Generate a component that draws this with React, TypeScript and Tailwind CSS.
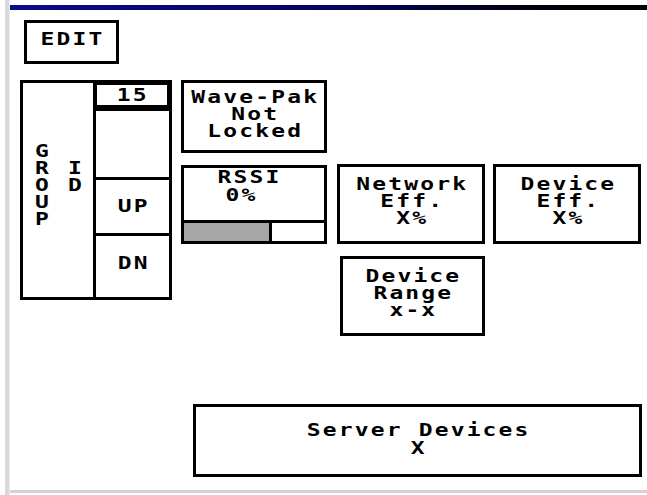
import React from "react";

const F = "font-['DejaVu_Sans_Mono','Liberation_Mono',monospace] font-bold text-[17px] leading-[17px] text-black scale-x-[1.35]";
const T = `${F} tracking-[1.6px]`;

function Lines({ text, className = "" }: { text: string; className?: string }) {
  return <div className={`${T} text-center whitespace-pre pl-[1.6px] ${className}`}>{text}</div>;
}

export default function App() {
  return (
    <div className="w-[647px] h-[495px] bg-white overflow-hidden flex">
      <div className="w-[5px] bg-white" />
      <div className="w-[5px] bg-[#d9d9d9] border-r border-[#ececec]" />
      <div className="flex-1 flex flex-col">
        <div className="h-[5px] bg-white" />
        <div className="h-[5px] bg-gradient-to-r from-[#0a0a8c] via-[#050560] to-[#000000]" />
        <div className="flex-1 flex flex-col">
          {/* EDIT */}
          <div className="ml-[14px] mt-[10px] w-[95px] h-[44px] border-[3px] border-black flex justify-center pt-[8px]">
            <Lines text="EDIT" />
          </div>

          <div className="flex items-start mt-[16px]">
            {/* Group ID */}
            <div className="ml-[10px] w-[152px] h-[220px] border-[3px] border-black flex">
              <div className="w-[70px] flex">
                <div className={`${F} ml-[11px] mt-[60px] w-[16px] text-center whitespace-pre`}>{"G\nR\nO\nU\nP"}</div>
                <div className={`${F} ml-[17px] mt-[77px] w-[16px] leading-[16px] text-center whitespace-pre`}>{"I\nD"}</div>
              </div>
              <div className="flex-1 border-l-[3px] border-black flex flex-col">
                <div className="bg-black pt-[2px] pb-[6px] pl-[1px] pr-[2px]">
                  <div className="h-[20px] bg-white flex justify-center items-center">
                    <Lines text="15" />
                  </div>
                </div>
                <div className="h-[69px] border-b-[3px] border-black" />
                <div className="h-[56px] border-b-[3px] border-black flex justify-center pt-[18px]">
                  <Lines text="UP" />
                </div>
                <div className="flex-1 flex justify-center pt-[19px]">
                  <Lines text="DN" />
                </div>
              </div>
            </div>

            {/* Wave-Pak / RSSI */}
            <div className="ml-[9px] flex flex-col">
              <div className="w-[146px] h-[73px] border-[3px] border-black flex justify-center pt-[6px]">
                <Lines text={"Wave-Pak\nNot\nLocked"} />
              </div>
              <div className="mt-[12px] w-[146px] h-[79px] border-[3px] border-black flex flex-col">
                <div className="h-[55px] border-b-[3px] border-black flex justify-center pr-[12px]">
                  <Lines text={"RSSI\n0% "} className="leading-[18px]" />
                </div>
                <div className="flex-1 flex">
                  <div className="w-[85px] bg-[#a6a6a6]" />
                  <div className="flex-1 border-l-[3px] border-black bg-white" />
                </div>
              </div>
            </div>

            {/* Eff boxes */}
            <div className="ml-[10px] mt-[84px] flex flex-col">
              <div className="flex">
                <div className="w-[148px] h-[80px] border-[3px] border-black flex justify-center pt-[9px]">
                  <Lines text={"Network\nEff.\nX%"} />
                </div>
                <div className="ml-[8px] w-[148px] h-[80px] border-[3px] border-black flex justify-center pt-[9px]">
                  <Lines text={"Device\nEff.\nX%"} />
                </div>
              </div>
              <div className="ml-[3px] mt-[12px] w-[145px] h-[80px] border-[3px] border-black flex justify-center pt-[9px]">
                <Lines text={"Device\nRange\nx-x"} />
              </div>
            </div>
          </div>

          {/* Server Devices */}
          <div className="ml-[183px] mt-[68px] w-[449px] h-[73px] border-[3px] border-black flex justify-center pt-[14px]">
            <Lines text={"Server Devices\nX"} className="leading-[18px]" />
          </div>
        </div>
        <div className="h-[3px] bg-[#d4d4d4]" />
        <div className="h-[2px] bg-white" />
      </div>
    </div>
  );
}
